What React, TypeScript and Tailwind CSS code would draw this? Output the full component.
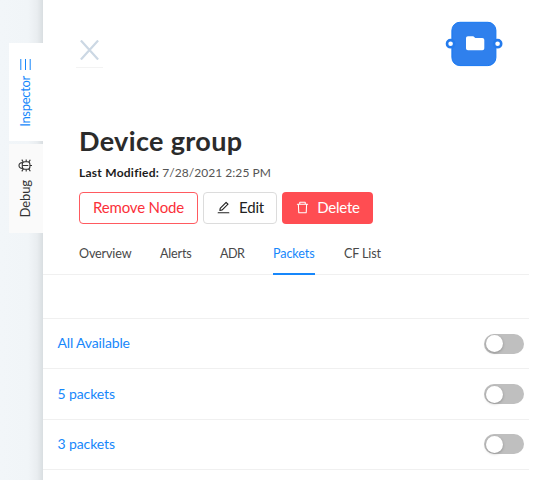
import { AiOutlineDelete, AiOutlineEdit } from "react-icons/ai";

const tabs = [
  { label: "Overview", width: "w-[52px]", tracking: "tracking-[-0.15px]" },
  { label: "Alerts", width: "w-[31px]", tracking: "tracking-[-0.2px]" },
  { label: "ADR", width: "w-[24px]", tracking: "tracking-[-0.5px]" },
  { label: "Packets", width: "w-[42px]", tracking: "tracking-[-0.1px]", active: true },
  { label: "CF List", width: "w-[38px]", tracking: "tracking-[-0.15px]" },
];

const rows = [
  { label: "All Available", tracking: "tracking-[-0.15px]" },
  { label: "5 packets", tracking: "tracking-[-0.1px]" },
  { label: "3 packets", tracking: "tracking-[-0.1px]" },
];

function BugIcon() {
  return (
    <svg className="h-[13px] w-[14px]" viewBox="0 0 14 13" fill="none" stroke="currentColor" strokeWidth="1.1">
      <rect x="4.3" y="2.7" width="7.6" height="7.6" rx="2.6" />
      <path d="M4.6 3.6C2.3 3.5 1 4.8 1 6.5s1.3 3 3.6 2.9M4.3 6.5h6M12 6.5h2M5.2 3 3.8.6M8.2 2.7V.4M10.8 3.1 12.3.7M5.2 10l-1.4 2.4M8.2 10.3v2.3M10.8 9.9l1.5 2.4" />
    </svg>
  );
}

function SideRail() {
  return (
    <aside className="flex h-full w-[43px] shrink-0 flex-col bg-[linear-gradient(to_right,#f2f6f9_0px,#f1f5f8_28px,#e9edf0_37px,#d9dee1_43px)] pt-[43px] pl-[9px]">
      <div className="flex h-[98px] flex-col items-center bg-white pt-[16px] pr-[2px] text-[#1787fb]">
        <svg className="h-[11px] w-[11px]" viewBox="0 0 11 11" fill="none" stroke="currentColor">
          <path d="M.8 0v11M5.5 0v11M10.2 0v11" />
        </svg>
        <span className="mt-[6px] rotate-180 text-[13px] leading-4 tracking-[-0.3px] [writing-mode:vertical-rl]">Inspector</span>
      </div>
      <div className="mt-[3px] flex h-[89px] flex-col items-center bg-[#fafafa] pt-[15px] pr-[2px] text-[#333]">
        <BugIcon />
        <span className="mt-[8px] rotate-180 text-[13px] leading-4 tracking-[-0.1px] [writing-mode:vertical-rl]">Debug</span>
      </div>
    </aside>
  );
}

function DeviceNode() {
  return (
    <svg className="h-[46px] w-[58px]" viewBox="0 0 58 46">
      <rect x="6.9" y="1.3" width="44" height="43.3" rx="8" fill="#2f80ed" stroke="#1677f2" />
      <circle cx="5.6" cy="22.7" r="3.6" fill="#fff" stroke="#247bed" strokeWidth="2.6" />
      <circle cx="52.6" cy="22.7" r="3.6" fill="#fff" stroke="#247bed" strokeWidth="2.6" />
      <path d="M21 17.2c0-1.2.8-2 2-2h5.3l2 1.8h7c1.2 0 2 .8 2 2v8.3c0 1.2-.8 2-2 2H23c-1.2 0-2-.8-2-2z" fill="#fff" />
    </svg>
  );
}

function Switch() {
  return (
    <button className="flex h-5 w-10 items-center rounded-full bg-[#bfbfbf] pl-[1.5px]">
      <span className="size-[17px] rounded-full bg-white shadow-[0_1px_3px_rgba(0,0,0,0.25)]" />
    </button>
  );
}

export default function App() {
  return (
    <div className="flex h-[480px] w-[541px] overflow-hidden bg-white font-['Lato','Liberation_Sans',sans-serif] text-[#333]">
      <SideRail />
      <main className="flex w-[486px] shrink-0 flex-col">
        <header className="flex h-[120px] items-start justify-between pr-[26px] pl-[33px]">
          <div className="mt-[35px] flex h-[33px] w-[27px] items-center justify-center border-b border-[#f3f3f3]">
            <svg className="mt-[-3px] h-5 w-[19px]" viewBox="0 0 19 20" fill="none" stroke="#ccd8e4" strokeWidth="2.2">
              <path d="M.9.5 18.1 19.5M18.1.5.9 19.5" />
            </svg>
          </div>
          <div className="mt-[21px]"><DeviceNode /></div>
        </header>
        <section className="pl-9">
          <h1 className="mt-[3px] h-9 text-[27px] leading-9 font-bold tracking-[0.35px] whitespace-nowrap text-[#2b2b2b]">Device group</h1>
          <p className="mt-[6px] h-4 text-[12px] leading-4 tracking-[0.05px] whitespace-nowrap text-[#555]">
            <b className="tracking-[0.25px] text-[#1c1c1c]">Last Modified:</b> 7/28/2021 2:25 PM
          </p>
          <div className="mt-[11px] flex gap-[5px] text-[15px]">
            <button className="h-8 w-[119px] rounded-[4px] border border-[#ff5a60] pb-px tracking-[-0.15px] text-[#fb3039]">Remove Node</button>
            <button className="flex h-8 w-[74px] items-center justify-center gap-2 rounded-[4px] border border-[#dcdcdc] pb-px tracking-[-0.2px] text-[#222]">
              <AiOutlineEdit className="size-[15px]" />Edit
            </button>
            <button className="flex h-8 w-[91px] items-center justify-center gap-[7px] rounded-[4px] bg-[#ff4d52] pb-px tracking-[-0.2px] text-white">
              <AiOutlineDelete className="size-[15px]" />Delete
            </button>
          </div>
        </section>
        <nav className="mt-[10px] flex h-[41px] gap-[29px] border-b border-[#f0f0f0] pl-9 text-[12.6px] text-[#484848]">
          {tabs.map((tab) => (
            <div
              key={tab.label}
              className={`${tab.width} ${tab.tracking} h-[41px] pt-[10px] leading-5 whitespace-nowrap ${tab.active ? "border-b-2 border-[#1787fb] text-[#1787fb]" : ""}`}
            >
              {tab.label}
            </div>
          ))}
        </nav>
        <div className="h-11 shrink-0 border-b border-[#f0f0f0]" />
        {rows.map((row) => (
          <div key={row.label} className="flex h-[50.4px] shrink-0 items-center justify-between border-b border-[#f0f0f0] pr-[5px] pl-[14.5px] text-[14px] text-[#1787fb]">
            <span className={`${row.tracking} pb-[2px]`}>{row.label}</span>
            <Switch />
          </div>
        ))}
      </main>
    </div>
  );
}
